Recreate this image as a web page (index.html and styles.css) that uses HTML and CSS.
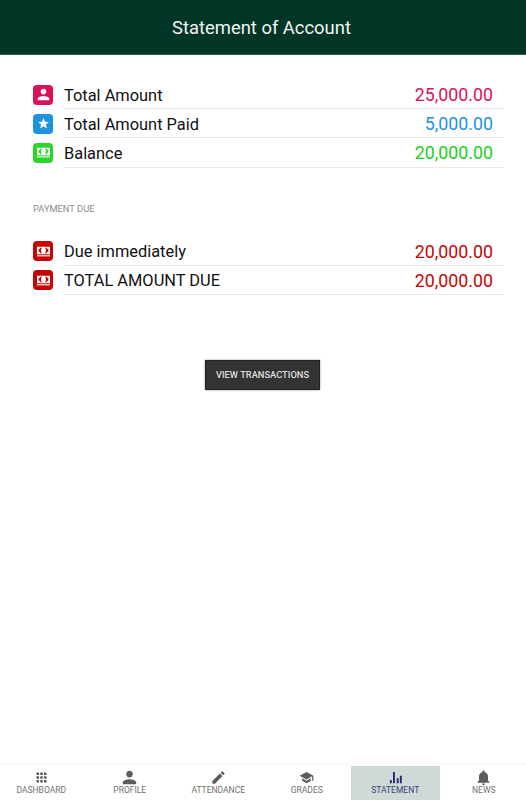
FILE: index.html
```html
<!DOCTYPE html>
<html lang="en">
<head>
    <meta charset="UTF-8">
    <meta name="viewport" content="width=device-width, initial-scale=1.0">
    <title>Statement of Account</title>
    <link rel="stylesheet" href="styles.css">
</head>
<body>
    <svg class="sprite" aria-hidden="true">
        <symbol id="icon-person" viewBox="3 3 18 18">
            <path d="M12 12c2.200 0 4-1.800 4-4s-1.800-4-4-4-4 1.800-4 4 1.800 4 4 4zm0 2c-2.700 0-8 1.300-8 4v2h16v-2c0-2.700-5.300-4-8-4z"/>
        </symbol>
        <symbol id="icon-star" viewBox="0 0 24 24">
            <path d="M12 17.300 18.200 21l-1.600-7L22 9.200l-7.200-.6L12 2 9.200 8.600 2 9.200 7.500 14l-1.700 7z"/>
        </symbol>
        <symbol id="icon-cash" viewBox="0 0 24 24">
            <path fill-rule="evenodd" d="M0 3h24v14H0zM9.500 5H6c0 1.500-1 2.500-3 3v4c2 .5 3 1.500 3 3h3.500C6.500 12.500 6.500 7.500 9.500 5zm5 0c3 2.500 3 7.500 0 10H18c0-1.500 1-2.500 3-3V8c-2-.5-3-1.500-3-3z"/>
            <path d="M0 19h24v2H0z"/>
        </symbol>
    </svg>

    <header class="header">
        <h1>Statement of Account</h1>
    </header>

    <main class="content">
        <ul class="list">
            <li class="item pink">
                <span class="badge"><svg><use href="#icon-person"/></svg></span>
                <div class="row"><span class="label">Total Amount</span><span class="value">25,000.00</span></div>
            </li>
            <li class="item blue">
                <span class="badge"><svg><use href="#icon-star"/></svg></span>
                <div class="row"><span class="label">Total Amount Paid</span><span class="value">5,000.00</span></div>
            </li>
            <li class="item green">
                <span class="badge"><svg><use href="#icon-cash"/></svg></span>
                <div class="row"><span class="label">Balance</span><span class="value">20,000.00</span></div>
            </li>
        </ul>

        <h2 class="list-title">PAYMENT DUE</h2>

        <ul class="list due">
            <li class="item red">
                <span class="badge"><svg><use href="#icon-cash"/></svg></span>
                <div class="row"><span class="label">Due immediately</span><span class="value">20,000.00</span></div>
            </li>
            <li class="item red">
                <span class="badge"><svg><use href="#icon-cash"/></svg></span>
                <div class="row"><span class="label">TOTAL AMOUNT DUE</span><span class="value">20,000.00</span></div>
            </li>
        </ul>

        <button class="btn" type="button">VIEW TRANSACTIONS</button>
    </main>

    <nav class="tabs">
        <a class="tab">
            <svg viewBox="0 0 24 24"><path d="M4 4h4v4H4zM10 4h4v4h-4zM16 4h4v4h-4zM4 10h4v4H4zM10 10h4v4h-4zM16 10h4v4h-4zM4 16h4v4H4zM10 16h4v4h-4zM16 16h4v4h-4z"/></svg>
            <span>DASHBOARD</span>
        </a>
        <a class="tab">
            <svg><use href="#icon-person"/></svg>
            <span>PROFILE</span>
        </a>
        <a class="tab">
            <svg viewBox="1 1 22 22"><path d="M3 17.250V21h3.750L17.800 9.900l-3.700-3.700L3 17.250zM20.700 7c.4-.4.4-1 0-1.400l-2.300-2.300c-.4-.4-1-.4-1.400 0l-1.800 1.800 3.700 3.700L20.700 7z"/></svg>
            <span>ATTENDANCE</span>
        </a>
        <a class="tab">
            <svg viewBox="0 0 24 24"><path d="M5 13.200v4L12 21l7-3.800v-4L12 17l-7-3.800zM12 3 1 9l11 6 9-4.900V17h2V9L12 3z"/></svg>
            <span>GRADES</span>
        </a>
        <a class="tab active">
            <svg viewBox="0 0 24 24"><path d="M3 16h3v5H3zM8 3h3v18H8zM14 13h3v8h-3zM19 9h3v12h-3z"/></svg>
            <span>STATEMENT</span>
        </a>
        <a class="tab">
            <svg viewBox="2 2 20 20"><path d="M12 22c1.100 0 2-.9 2-2h-4c0 1.100.9 2 2 2zm6-6v-5c0-3.100-1.600-5.600-4.500-6.300V4c0-.8-.7-1.500-1.500-1.500s-1.500.7-1.500 1.500v.7C7.600 5.400 6 7.900 6 11v5l-2 2v1h16v-1l-2-2z"/></svg>
            <span>NEWS</span>
        </a>
    </nav>
</body>
</html>
```

FILE: styles.css
```css
* {
    box-sizing: border-box;
}
body {
    margin: 0;
    height: 800px;
    display: flex;
    flex-direction: column;
    overflow: hidden;
    background-color: #fff;
    color: #111;
    font-family: Roboto, sans-serif;
}
.sprite {
    display: none;
}
.header {
    height: 55px;
    background-color: #033527;
    border-bottom: 1px solid #34594e;
    text-align: center;
}
.header h1 {
    margin: 0;
    padding-right: 3px;
    line-height: 56px;
    font-size: 18.400px;
    font-weight: 400;
    color: #f1f4f2;
}
.content {
    flex: 1;
    padding: 25px 22px 0 33px;
}
.list {
    list-style: none;
    margin: 0;
    padding: 0;
}
.item {
    display: flex;
    align-items: center;
    gap: 11px;
    height: 29.200px;
}
.badge {
    display: flex;
    align-items: center;
    justify-content: center;
    width: 20px;
    height: 20px;
    border-radius: 4px;
}
.badge svg {
    width: 13px;
    height: 13px;
    fill: #fff;
}
.row {
    flex: 1;
    display: flex;
    justify-content: space-between;
    height: 100%;
    padding-right: 11px;
    border-bottom: 1px solid #e9e9e9;
    line-height: 31px;
}
.due .row {
    line-height: 29px;
}
.label {
    font-size: 16.400px;
}
.value {
    font-size: 17.800px;
    line-height: 29px;
}
.pink .badge {
    background-color: #dc1059;
}
.pink .value {
    color: #dc1059;
}
.blue .badge {
    background-color: #1d93dd;
}
.blue .value {
    color: #1d93dd;
}
.green .badge {
    background-color: #2bd52b;
}
.green .value {
    color: #1bcf1b;
}
.red .badge {
    background-color: #c60404;
}
.red .value {
    color: #c60404;
}
.list-title {
    margin: 34px 0 22px;
    font-size: 9.300px;
    font-weight: 400;
    line-height: 13px;
    color: #8a8a8a;
}
.btn {
    display: block;
    width: 115px;
    height: 30px;
    margin: 65px 0 0 172px;
    padding: 0;
    background-color: #333;
    border: 1px solid #222;
    box-shadow: 0 0 2px rgba(0,0,0,0.4);
    font-family: inherit;
    font-size: 9.300px;
    font-weight: 500;
    color: #dedede;
}
.tabs {
    display: grid;
    grid-template-columns: repeat(6, 1fr);
    height: 36px;
    margin: 0 -2px 0 -3px;
    padding: 1px 0 0;
    border-top: 1px solid #f6f6f6;
}
.tab {
    display: flex;
    flex-direction: column;
    align-items: center;
    padding-top: 4px;
    font-size: 8.500px;
    line-height: 11px;
    color: #707070;
}
.tab svg {
    width: 15px;
    height: 15px;
    fill: #5c5c5c;
}
.tab.active {
    background-color: #d0d9d6;
    color: #36437c;
}
.tab.active svg {
    fill: #1d2870;
}
```
